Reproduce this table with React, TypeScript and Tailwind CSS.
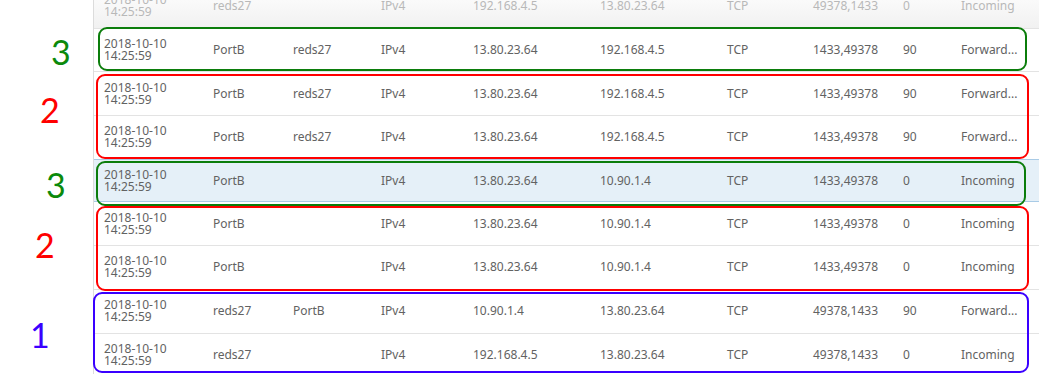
type Row = {
  src: string;
  dst: string;
  ip: string;
  from: string;
  to: string;
  ports: string;
  rule: string;
  status: string;
  active?: boolean;
};

const rows: Row[] = [
  { src: 'reds27', dst: '', ip: 'IPv4', from: '192.168.4.5', to: '13.80.23.64', ports: '49378,1433', rule: '0', status: 'Incoming' },
  { src: 'PortB', dst: 'reds27', ip: 'IPv4', from: '13.80.23.64', to: '192.168.4.5', ports: '1433,49378', rule: '90', status: 'Forward...' },
  { src: 'PortB', dst: 'reds27', ip: 'IPv4', from: '13.80.23.64', to: '192.168.4.5', ports: '1433,49378', rule: '90', status: 'Forward...' },
  { src: 'PortB', dst: 'reds27', ip: 'IPv4', from: '13.80.23.64', to: '192.168.4.5', ports: '1433,49378', rule: '90', status: 'Forward...' },
  { src: 'PortB', dst: '', ip: 'IPv4', from: '13.80.23.64', to: '10.90.1.4', ports: '1433,49378', rule: '0', status: 'Incoming', active: true },
  { src: 'PortB', dst: '', ip: 'IPv4', from: '13.80.23.64', to: '10.90.1.4', ports: '1433,49378', rule: '0', status: 'Incoming' },
  { src: 'PortB', dst: '', ip: 'IPv4', from: '13.80.23.64', to: '10.90.1.4', ports: '1433,49378', rule: '0', status: 'Incoming' },
  { src: 'reds27', dst: 'PortB', ip: 'IPv4', from: '10.90.1.4', to: '13.80.23.64', ports: '49378,1433', rule: '90', status: 'Forward...' },
  { src: 'reds27', dst: '', ip: 'IPv4', from: '192.168.4.5', to: '13.80.23.64', ports: '49378,1433', rule: '0', status: 'Incoming' },
];

const TableRow = ({ row, faded }: { row: Row; faded?: boolean }) => (
  <div
    className={`flex items-center h-[43.7px] pl-[10px] border-b ${
      row.active ? 'bg-[#e5f0f8] border-[#a9cbe6] border-t -mt-px' : 'border-[#e3e3e3]'
    } ${faded ? 'bg-gradient-to-b from-white to-[#f1f1f1] text-[#b8b8b8]' : 'text-[#626262]'}`}
  >
    <div className="w-[109px] leading-[12px]">
      <div>2018-10-10</div>
      <div>14:25:59</div>
    </div>
    <div className="w-[80px]">{row.src}</div>
    <div className="w-[88px]">{row.dst}</div>
    <div className="w-[92px]">{row.ip}</div>
    <div className="w-[127px]">{row.from}</div>
    <div className="w-[127px]">{row.to}</div>
    <div className="w-[86px]">TCP</div>
    <div className="w-[90px]">{row.ports}</div>
    <div className="w-[58px]">{row.rule}</div>
    <div className="flex-1">{row.status}</div>
  </div>
);

const Box = ({ cls }: { cls: string }) => (
  <div className={`absolute rounded-[9px] border-2 pointer-events-none ${cls}`} />
);

const Mark = ({ n, cls }: { n: string; cls: string }) => (
  <div className={`absolute text-[34px] leading-none ${cls}`} style={{ fontFamily: 'Lato, "Open Sans", sans-serif' }}>
    {n}
  </div>
);

export default function App() {
  return (
    <div className="relative w-[1039px] h-[374px] overflow-hidden bg-white">
      <div
        className="ml-[93px] -mt-[15px] border-l border-[#dcdcdc] text-[12px]"
        style={{ fontFamily: '"Noto Sans", "Open Sans", sans-serif' }}
      >
        {rows.map((r, i) => (
          <TableRow key={i} row={r} faded={i === 0} />
        ))}
      </div>

      <Box cls="left-[98px] top-[27px] w-[929px] h-[44px] border-[#0b7d0b]" />
      <Box cls="left-[96px] top-[74px] w-[933px] h-[85px] border-[#ff0000]" />
      <Box cls="left-[96px] top-[161px] w-[930px] h-[45px] border-[#0b7d0b]" />
      <Box cls="left-[96px] top-[206px] w-[933px] h-[85px] border-[#ff0000]" />
      <Box cls="left-[93px] top-[292px] w-[936px] h-[81px] border-[#3a00ff]" />

      <Mark n="3" cls="left-[51px] top-[35px] text-[#0b8a0b]" />
      <Mark n="2" cls="left-[40px] top-[93px] text-[#ff0000]" />
      <Mark n="3" cls="left-[46px] top-[168px] text-[#0b8a0b]" />
      <Mark n="2" cls="left-[35px] top-[228px] text-[#ff0000]" />
      <Mark n="1" cls="left-[30px] top-[318px] text-[#3a00ff]" />
    </div>
  );
}
